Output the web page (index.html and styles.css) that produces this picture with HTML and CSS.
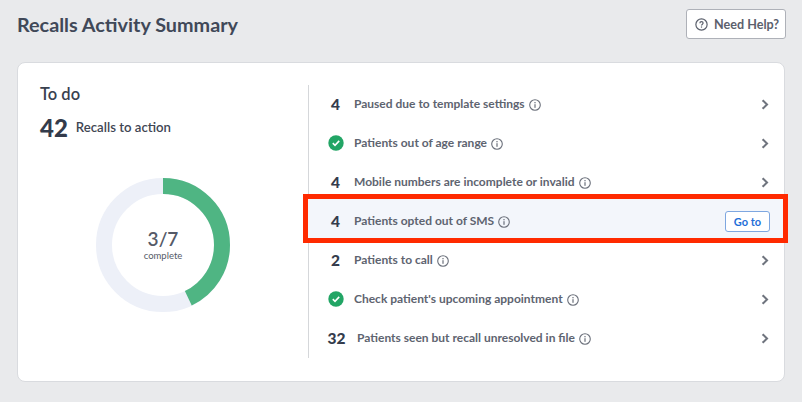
FILE: index.html
```html
<!DOCTYPE html>
<html lang="en">
<head>
<meta charset="utf-8">
<title>Recalls Activity Summary</title>
<link rel="stylesheet" href="styles.css">
</head>
<body>
<svg class="defs" width="0" height="0" aria-hidden="true">
  <symbol id="info" viewBox="0 0 12 12">
    <circle cx="6" cy="6" r="5.3" fill="none" stroke="currentColor" stroke-width="1.1"/>
    <rect x="5.4" y="5.2" width="1.2" height="3.6" fill="currentColor"/>
    <rect x="5.4" y="3" width="1.2" height="1.3" fill="currentColor"/>
  </symbol>
  <symbol id="chev" viewBox="0 0 8 11">
    <path d="M1.6 1.2 6 5.5 1.6 9.8" fill="none" stroke="currentColor" stroke-width="2.1"/>
  </symbol>
  <symbol id="check" viewBox="0 0 16 16">
    <circle cx="8" cy="8" r="7.7" fill="#22a565"/>
    <path d="M4.8 8.2 7 10.3 11.2 5.9" fill="none" stroke="#fff" stroke-width="1.6"/>
  </symbol>
</svg>
<header class="top">
  <h1 class="title">Recalls Activity Summary</h1>
  <button class="help" type="button">
    <svg class="help-icon" viewBox="0 0 12 12">
      <circle cx="6" cy="6" r="5.2" fill="none" stroke="currentColor" stroke-width="1.1"/>
      <path d="M4.5 4.8C4.5 3.9 5.2 3.4 6 3.4S7.5 3.9 7.5 4.7C7.5 5.7 6 5.7 6 7" fill="none" stroke="currentColor" stroke-width="1.1"/>
      <rect x="5.45" y="7.8" width="1.1" height="1.1" fill="currentColor"/>
    </svg>
    Need Help?
  </button>
</header>
<main class="card">
  <section class="todo">
    <h2 class="todo-title">To do</h2>
    <div class="todo-count"><strong>42</strong><span>Recalls to action</span></div>
    <div class="donut">
      <svg viewBox="0 0 134 134" width="134" height="134">
        <circle cx="67" cy="67" r="59" fill="none" stroke="#edf0f8" stroke-width="16"/>
        <circle cx="67" cy="67" r="59" fill="none" stroke="#4fb583" stroke-width="16" stroke-dasharray="158.9 370.7" transform="rotate(-90 67 67)"/>
      </svg>
      <div class="donut-text"><span class="frac">3/7</span><span class="sub">complete</span></div>
    </div>
  </section>
  <section class="list">
    <div class="row"><span class="num">4</span><span class="label">Paused due to template settings</span><svg class="info"><use href="#info"/></svg><svg class="chev"><use href="#chev"/></svg></div>
    <div class="row"><span class="num"><svg class="check"><use href="#check"/></svg></span><span class="label">Patients out of age range</span><svg class="info"><use href="#info"/></svg><svg class="chev"><use href="#chev"/></svg></div>
    <div class="row"><span class="num">4</span><span class="label">Mobile numbers are incomplete or invalid</span><svg class="info"><use href="#info"/></svg><svg class="chev"><use href="#chev"/></svg></div>
    <div class="row row-active"><span class="mark"></span><span class="num">4</span><span class="label">Patients opted out of SMS</span><svg class="info"><use href="#info"/></svg><button class="goto" type="button">Go to</button></div>
    <div class="row"><span class="num">2</span><span class="label">Patients to call</span><svg class="info"><use href="#info"/></svg><svg class="chev"><use href="#chev"/></svg></div>
    <div class="row"><span class="num"><svg class="check"><use href="#check"/></svg></span><span class="label">Check patient's upcoming appointment</span><svg class="info"><use href="#info"/></svg><svg class="chev"><use href="#chev"/></svg></div>
    <div class="row"><span class="num num-wide">32</span><span class="label">Patients seen but recall unresolved in file</span><svg class="info"><use href="#info"/></svg><svg class="chev"><use href="#chev"/></svg></div>
  </section>
</main>
</body>
</html>
```

FILE: styles.css
```css
* { box-sizing: border-box; }
html, body { height: 100%; }
body {
  margin: 0;
  overflow: hidden;
  background: #e9eaec;
  font-family: Lato, "Liberation Sans", sans-serif;
  color: #3a4252;
}
.defs { position: absolute; }
.top {
  display: flex;
  justify-content: space-between;
  align-items: center;
  height: 62px;
  padding: 0 16px 15px 17px;
}
.title {
  margin: 0;
  font-size: 19.8px;
  font-weight: 700;
  color: #404858;
}
.help {
  display: flex;
  align-items: center;
  gap: 6px;
  width: 100px;
  height: 30px;
  margin-top: 1px;
  padding: 0 0 0 8px;
  background: #fff;
  border: 1px solid #aeb1b8;
  border-radius: 3px;
  font: 700 12.6px Lato, sans-serif;
  color: #5b606c;
}
.help-icon { width: 13px; height: 13px; flex: none; }
.card {
  display: flex;
  width: 768px;
  height: 320px;
  margin-left: 17px;
  background: #fff;
  border: 1px solid #d9dbdf;
  border-radius: 8px;
}
.todo {
  width: 290px;
  flex: none;
  padding: 22px 0 0 22px;
}
.todo-title {
  margin: 0;
  font-size: 16.5px;
  line-height: 19px;
  font-weight: 600;
  color: #39414f;
}
.todo-count {
  display: flex;
  align-items: center;
  gap: 8px;
  margin-top: 11px;
  height: 24px;
}
.todo-count strong { font-size: 24px; font-weight: 900; color: #333b4b; }
.todo-count span { font-size: 13.2px; font-weight: 600; color: #3f4653; }
.donut {
  position: relative;
  width: 134px;
  height: 134px;
  margin: 39px 0 0 56px;
}
.donut svg { display: block; }
.donut-text {
  position: absolute;
  inset: 0 0 1px;
  display: flex;
  flex-direction: column;
  align-items: center;
  justify-content: center;
  color: #555a68;
}
.frac { font-size: 19px; line-height: 22px; font-weight: 600; }
.sub { font-size: 9.5px; line-height: 12px; }
.list {
  width: 476px;
  height: 273px;
  margin-top: 22px;
  border-left: 1px solid #d5d7da;
}
.row {
  position: relative;
  display: flex;
  align-items: center;
  height: 39px;
  padding: 0 15px 0 19px;
  font-size: 12px;
  color: #5a606c;
}
.row > * { position: relative; }
.row .mark {
  position: absolute;
  top: -8px;
  bottom: -2px;
  left: -6px;
  right: -4px;
  background: #f3f6fb;
  border: 5px solid #ff2a00;
}
.num {
  display: flex;
  justify-content: center;
  width: 15px;
  margin: 0 11px 2px 0;
  flex: none;
  font-size: 15.5px;
  font-weight: 900;
  color: #343c4c;
}
.num-wide { width: 17px; margin-right: 12px; }
.label { margin-bottom: 2px; font-weight: 700; white-space: nowrap; color: #5e6470; }
.check { width: 16px; height: 16px; display: block; flex: none; }
.info { width: 12px; height: 12px; margin-left: 4px; flex: none; color: #6b707b; }
.chev { width: 8px; height: 11px; margin-left: auto; flex: none; color: #6f747e; }
.goto {
  width: 45px;
  height: 21px;
  margin: 0 -1px 0 auto;
  padding: 0;
  background: #fff;
  border: 1px solid #7ea7e0;
  border-radius: 3px;
  font: 700 11px Lato, sans-serif;
  color: #1f6fd8;
}
```
